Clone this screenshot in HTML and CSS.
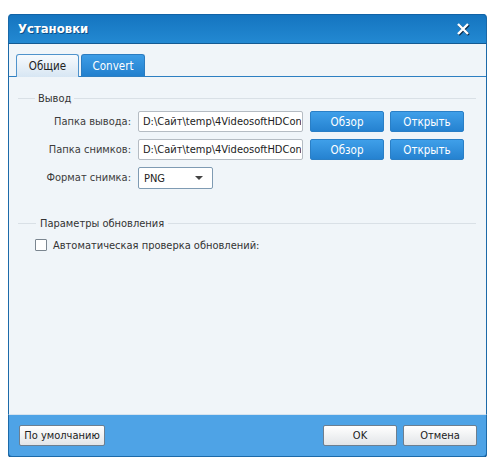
FILE: index.html
```html
<!DOCTYPE html>
<html>
<head>
<meta charset="utf-8">
<link rel="stylesheet" href="styles.css">
</head>
<body>
<div class="dialog">
  <div class="titlebar">
    <span class="title">Установки</span>
    <svg class="close" width="14" height="14" viewBox="0 0 14 14">
      <path d="M2 2 L12 12 M12 2 L2 12" stroke="#0a2a48" stroke-width="2.6" transform="translate(0.8,0.8)"/>
      <path d="M2 2 L12 12 M12 2 L2 12" stroke="#fff" stroke-width="2.4"/>
    </svg>
  </div>
  <div class="body">
    <div class="tabs">
      <div class="tab active">Общие</div>
      <div class="tab">Convert</div>
    </div>
    <div class="content">
      <div class="group-head"><span class="line short"></span><span class="gl">Вывод</span><span class="line"></span></div>
      <div class="rows">
        <div class="row">
          <span class="lbl">Папка вывода:</span>
          <div class="input"><span class="val">D:\Сайт\temp\4VideosoftHDConv</span></div>
          <div class="btn blue">Обзор</div>
          <div class="btn blue">Открыть</div>
        </div>
        <div class="row">
          <span class="lbl">Папка снимков:</span>
          <div class="input"><span class="val">D:\Сайт\temp\4VideosoftHDConv</span></div>
          <div class="btn blue">Обзор</div>
          <div class="btn blue">Открыть</div>
        </div>
        <div class="row">
          <span class="lbl">Формат снимка:</span>
          <div class="select"><span>PNG</span><span class="arrow"></span></div>
        </div>
      </div>
      <div class="group-head g2"><span class="line short"></span><span class="gl">Параметры обновления</span><span class="line"></span></div>
      <div class="check-row"><span class="checkbox"></span><span>Автоматическая проверка обновлений:</span></div>
    </div>
  </div>
  <div class="footer">
    <div class="btn gray w86">По умолчанию</div>
    <div class="spacer"></div>
    <div class="btn gray w74">OK</div>
    <div class="btn gray w74">Отмена</div>
  </div>
</div>
</body>
</html>
```

FILE: styles.css
```css
html, body {
  margin: 0;
  padding: 0;
  background: #ffffff;
}
body {
  font-family: "DejaVu Sans Condensed", "Liberation Sans", sans-serif;
  font-size: 11px;
  color: #333;
  padding: 14px 0 0 8px;
}
.dialog {
  width: 479px;
  height: 443px;
  display: flex;
  flex-direction: column;
}
.titlebar {
  background: linear-gradient(#1474bf, #2389d2);
  border-radius: 4px 4px 0 0;
  border: 1px solid #1868a8;
  border-bottom: 1px solid #145a92;
  border-top: none;
  display: flex;
  align-items: center;
  padding: 0 16px 0 9px;
  box-sizing: border-box;
  height: 30px;
  box-shadow: inset 0 1px 0 #1163a6;
}
.title {
  color: #fff;
  font-weight: bold;
  font-size: 13px;
  text-shadow: 1px 1px 0 #0d4f86;
  flex: 1;
}
.close { display: block; }
.body {
  flex: 1;
  background: #f0f5f9;
  border-left: 1px solid #1c6aa9;
  border-right: 1px solid #1c6aa9;
  display: flex;
  flex-direction: column;
}
.tabs {
  display: flex;
  gap: 2px;
  padding: 11px 0 0 7px;
  border-bottom: 1px solid #2d7fc2;
  height: 33px;
  box-sizing: border-box;
  align-items: flex-end;
}
.tab {
  width: 64px;
  height: 22px;
  box-sizing: border-box;
  border-radius: 3px 3px 0 0;
  display: flex;
  align-items: center;
  justify-content: center;
  font-size: 11.5px;
  color: #fff;
  background: linear-gradient(#3d9de6, #2280ce);
  border: 1px solid #2b7cc0;
  border-bottom: none;
}
.tab.active {
  width: 63px;
  color: #222;
  background: linear-gradient(#f7fafd, #d7e6f3);
  border: 1px solid #4f93cc;
  border-bottom: none;
  height: 23px;
  margin-bottom: -1px;
}
.content {
  padding: 0 10px 0 9px;
}
.group-head {
  display: flex;
  align-items: center;
  height: 14px;
  margin-top: 14px;
  color: #333;
}
.group-head.g2 { margin-top: 28px; }
.line {
  flex: 1;
  height: 1px;
  background: #d9e0e6;
}
.line.short {
  flex: none;
  width: 17px;
}
.gl { padding: 0 3px; }
.group-head.g2 .line.short { width: 18px; }
.group-head.g2 .gl { padding: 0 4px; }
.rows {
  margin-top: 6px;
  display: flex;
  flex-direction: column;
  gap: 7px;
}
.row {
  display: flex;
  align-items: center;
  height: 21px;
}
.lbl {
  width: 113px;
  text-align: right;
  margin-right: 7px;
  color: #3c3c3c;
}
.input {
  width: 165px;
  height: 21px;
  box-sizing: border-box;
  background: #fff;
  border: 1px solid #b5bcc3;
  border-radius: 2px;
  padding: 0 0 0 4px;
  color: #222;
  white-space: nowrap;
  overflow: hidden;
  margin-right: 7px;
  display: flex;
  align-items: center;
}
.val {
  display: block;
  overflow: hidden;
  white-space: nowrap;
  max-width: 158px;
}
.btn {
  height: 21px;
  box-sizing: border-box;
  display: flex;
  align-items: center;
  justify-content: center;
  border-radius: 2px;
}
.btn.blue {
  width: 74px;
  color: #fff;
  font-size: 11.5px;
  background: linear-gradient(#3f9fe9, #2582d0);
  border: 1px solid #2a7fc6;
  margin-right: 6px;
}
.select {
  width: 75px;
  height: 22px;
  box-sizing: border-box;
  background: #fff;
  border: 1px solid #7f9bb3;
  border-radius: 2px;
  display: flex;
  align-items: center;
  justify-content: space-between;
  padding: 0 9px 0 5px;
  color: #222;
  margin-top: 1px;
}
.arrow {
  width: 0;
  height: 0;
  border-left: 4px solid transparent;
  border-right: 4px solid transparent;
  border-top: 4px solid #444;
}
.check-row {
  display: flex;
  align-items: center;
  height: 14px;
  margin-top: 8px;
  padding-left: 17px;
  color: #333;
  gap: 6px;
}
.checkbox {
  width: 10px;
  height: 10px;
  border: 1px solid #7b8690;
  background: #fff;
  border-radius: 1px;
}
.footer {
  height: 43px;
  box-sizing: border-box;
  background: #4ea3e6;
  border: 1px solid #1c6aa9;
  border-top: 1px solid #d5e3ef;
  border-radius: 0 0 4px 4px;
  display: flex;
  align-items: flex-start;
  padding: 10px 9px 0 10px;
  gap: 6px;
  box-shadow: 0 1px 0 #16558a;
}
.spacer { flex: 1; }
.btn.gray {
  height: 21px;
  color: #222;
  background: linear-gradient(#ffffff, #e2e5e8);
  border: 1px solid #6d7f90;
}
.btn.w74 { width: 74px; }
.btn.w86 { width: 86px; }
```
